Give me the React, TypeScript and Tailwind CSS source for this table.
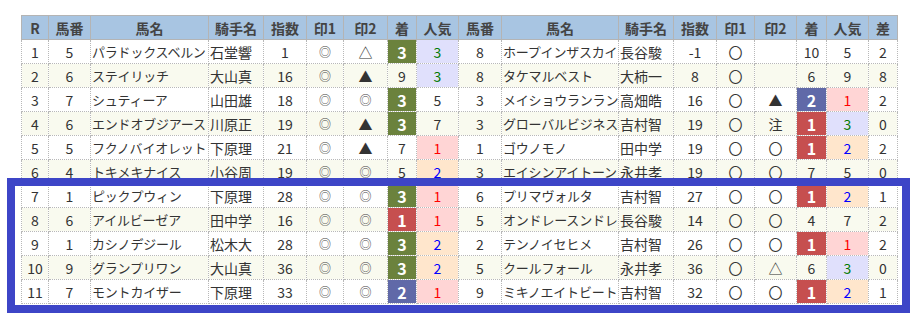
type Row = (string | number)[]

// R, 馬番, 馬名, 騎手名, 指数, 印1, 印2, 着, 人気, 馬番, 馬名, 騎手名, 指数, 印1, 印2, 着, 人気, 差
const rows: Row[] = [
  [1, 5, 'パラドックスベルン', '石堂響', 1, '◎', '△', 3, 3, 8, 'ホープインザスカイ', '長谷駿', -1, '〇', '', 10, 5, 2],
  [2, 6, 'ステイリッチ', '大山真', 16, '◎', '▲', 9, 3, 8, 'タケマルベスト', '大柿一', 8, '〇', '', 6, 9, 8],
  [3, 7, 'シュティーア', '山田雄', 18, '◎', '◎', 3, 5, 3, 'メイショウランラン', '高畑皓', 16, '〇', '▲', 2, 1, 2],
  [4, 6, 'エンドオブジアース', '川原正', 19, '◎', '▲', 3, 7, 3, 'グローバルビジネス', '吉村智', 19, '〇', '注', 1, 3, 0],
  [5, 5, 'フクノバイオレット', '下原理', 21, '◎', '▲', 7, 1, 1, 'ゴウノモノ', '田中学', 19, '〇', '〇', 1, 2, 2],
  [6, 4, 'トキメキナイス', '小谷周', 19, '◎', '◎', 5, 2, 3, 'エイシンアイトーン', '永井孝', 19, '〇', '〇', 7, 5, 0],
  [7, 1, 'ピックプウィン', '下原理', 28, '◎', '◎', 3, 1, 6, 'プリマヴォルタ', '吉村智', 27, '〇', '〇', 1, 2, 1],
  [8, 6, 'アイルビーゼア', '田中学', 16, '◎', '◎', 1, 1, 5, 'オンドレースンドレ', '長谷駿', 14, '〇', '〇', 4, 7, 2],
  [9, 1, 'カシノデジール', '松木大', 28, '◎', '◎', 3, 2, 2, 'テンノイセヒメ', '吉村智', 26, '〇', '〇', 1, 1, 2],
  [10, 9, 'グランプリワン', '大山真', 36, '◎', '◎', 3, 2, 5, 'クールフォール', '永井孝', 36, '〇', '△', 6, 3, 0],
  [11, 7, 'モントカイザー', '下原理', 33, '◎', '◎', 2, 1, 9, 'ミキノエイトビート', '吉村智', 32, '〇', '〇', 1, 2, 1],
]

const heads = ['R', '馬番', '馬名', '騎手名', '指数', '印1', '印2', '着', '人気', '馬番', '馬名', '騎手名', '指数', '印1', '印2', '着', '人気', '差']
const widths = [27, 42, 118, 55, 43, 37, 44, 29, 42, 43, 117, 55, 43, 38, 42, 30, 42, 29]

function finishClass(v: string | number) {
  if (v === 1) return 'bg-[#c64f4f] text-white font-bold text-[16px]'
  if (v === 2) return 'bg-[#6069a8] text-white font-bold text-[16px]'
  if (v === 3) return 'bg-[#6b823d] text-white font-bold text-[16px]'
  return ''
}

function popClass(v: string | number) {
  if (v === 1) return 'bg-[#ffd5d5] text-[#ff0000]'
  if (v === 2) return 'bg-[#ffe6cc] text-[#0000ff]'
  if (v === 3) return 'bg-[#e0e0fc] text-[#007a00]'
  return ''
}

function Cell({ v, col }: { v: string | number; col: number }) {
  const isName = col === 2 || col === 10
  const isJockey = col === 3 || col === 11
  let extra = ''
  if (col === 7 || col === 15) extra = finishClass(v)
  if (col === 8 || col === 16) extra = popClass(v)
  const mark = v === '◎' ? 'text-[12px] text-[#444]' : ''
  return (
    <td
      className={`h-[24px] p-0 border border-dotted border-[#b8b8b8] whitespace-nowrap overflow-hidden ${
        isName ? 'text-left pl-[1px] text-[13px] tracking-[-0.2px]' : isJockey ? 'text-left pl-[1px]' : 'text-center'
      } ${extra} ${mark}`}
    >
      {v}
    </td>
  )
}

export default function App() {
  return (
    <div className="relative w-[915px] h-[318px] bg-white pt-[15px] pl-[21px] font-['Noto_Sans_CJK_JP',sans-serif] text-[14px] text-[#333]">
      <table className="table-fixed border-collapse w-[876px] leading-none">
        <colgroup>
          {widths.map((w, i) => (
            <col key={i} style={{ width: w }} />
          ))}
        </colgroup>
        <thead>
          <tr className="bg-[#a8c5e2]">
            {heads.map((h, i) => (
              <th key={i} className="h-[24px] p-0 border border-[#b4b4b4] font-bold text-[#444] text-center">
                {h}
              </th>
            ))}
          </tr>
        </thead>
        <tbody>
          {rows.map((r, ri) => (
            <tr key={ri} className={ri % 2 === 1 ? 'bg-[#f9faef]' : 'bg-white'}>
              {r.map((v, ci) => (
                <Cell key={ci} v={v} col={ci} />
              ))}
            </tr>
          ))}
        </tbody>
      </table>
      <div className="absolute left-[7px] top-[178px] w-[903px] h-[135px] border-[8px] border-[#3d45c7] pointer-events-none" />
    </div>
  )
}
